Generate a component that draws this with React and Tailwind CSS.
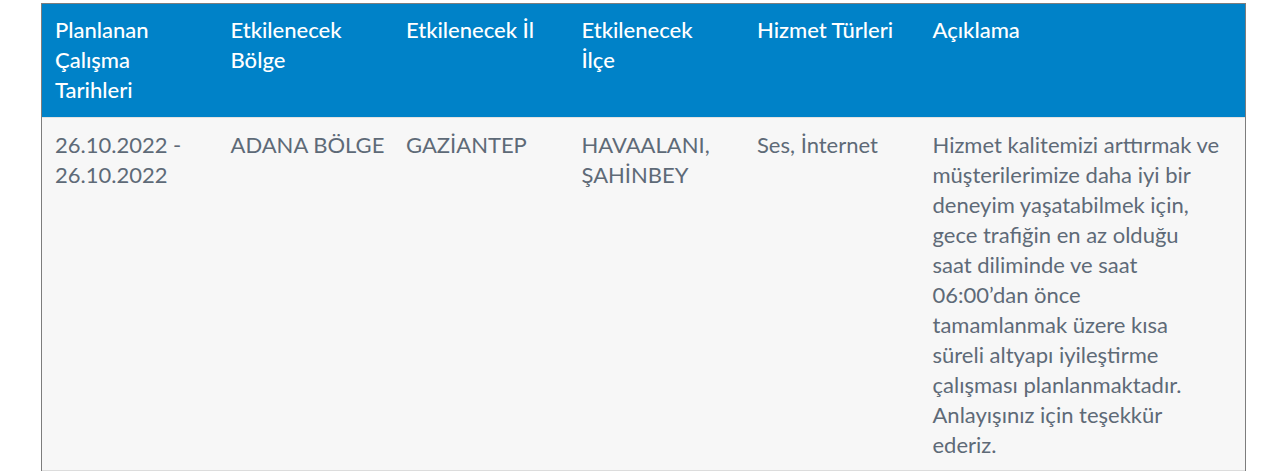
import React from "react";

const headers = [
  "Planlanan Çalışma Tarihleri",
  "Etkilenecek Bölge",
  "Etkilenecek İl",
  "Etkilenecek İlçe",
  "Hizmet Türleri",
  "Açıklama",
];

const row = [
  "26.10.2022 - 26.10.2022",
  "ADANA BÖLGE",
  "GAZİANTEP",
  "HAVAALANI, ŞAHİNBEY",
  "Ses, İnternet",
  "Hizmet kalitemizi arttırmak ve müşterilerimize daha iyi bir deneyim yaşatabilmek için, gece trafiğin en az olduğu saat diliminde ve saat 06:00’dan önce tamamlanmak üzere kısa süreli altyapı iyileştirme çalışması planlanmaktadır. Anlayışınız için teşekkür ederiz.",
];

const pads = [
  "pl-[13px] pr-[8px]",
  "pl-[13px] pr-[4px]",
  "pl-[13px] pr-[8px]",
  "pl-[13px] pr-[30px]",
  "pl-[13px] pr-[8px]",
  "pl-[13px] pr-[25px]",
];

export default function App() {
  return (
    <div
      className="w-[1280px] h-[475px] bg-white pl-[41px] pt-[3px] overflow-hidden"
      style={{ fontFamily: "Lato, 'Open Sans', sans-serif" }}
    >
      <div className="w-[1205px] border-x border-t border-[#7d7d7d]">
        <div className="grid grid-cols-[repeat(5,175.5px)_1fr] bg-[#0082c8] text-white font-medium text-[22px] leading-[30px]">
          {headers.map((h, i) => (
            <div key={i} className={`${pads[i]} pt-[11px] pb-[12px]`}>
              {h}
            </div>
          ))}
        </div>
        <div className="grid grid-cols-[repeat(5,175.5px)_1fr] bg-[#f7f7f7] text-[#5e6a77] text-[22px] leading-[30px] border-t border-[#e2e2e2] border-b border-b-[#dcdcdc]">
          {row.map((c, i) => (
            <div key={i} className={`${pads[i]} pt-[12px] pb-[10px]`}>
              {c}
            </div>
          ))}
        </div>
      </div>
    </div>
  );
}
